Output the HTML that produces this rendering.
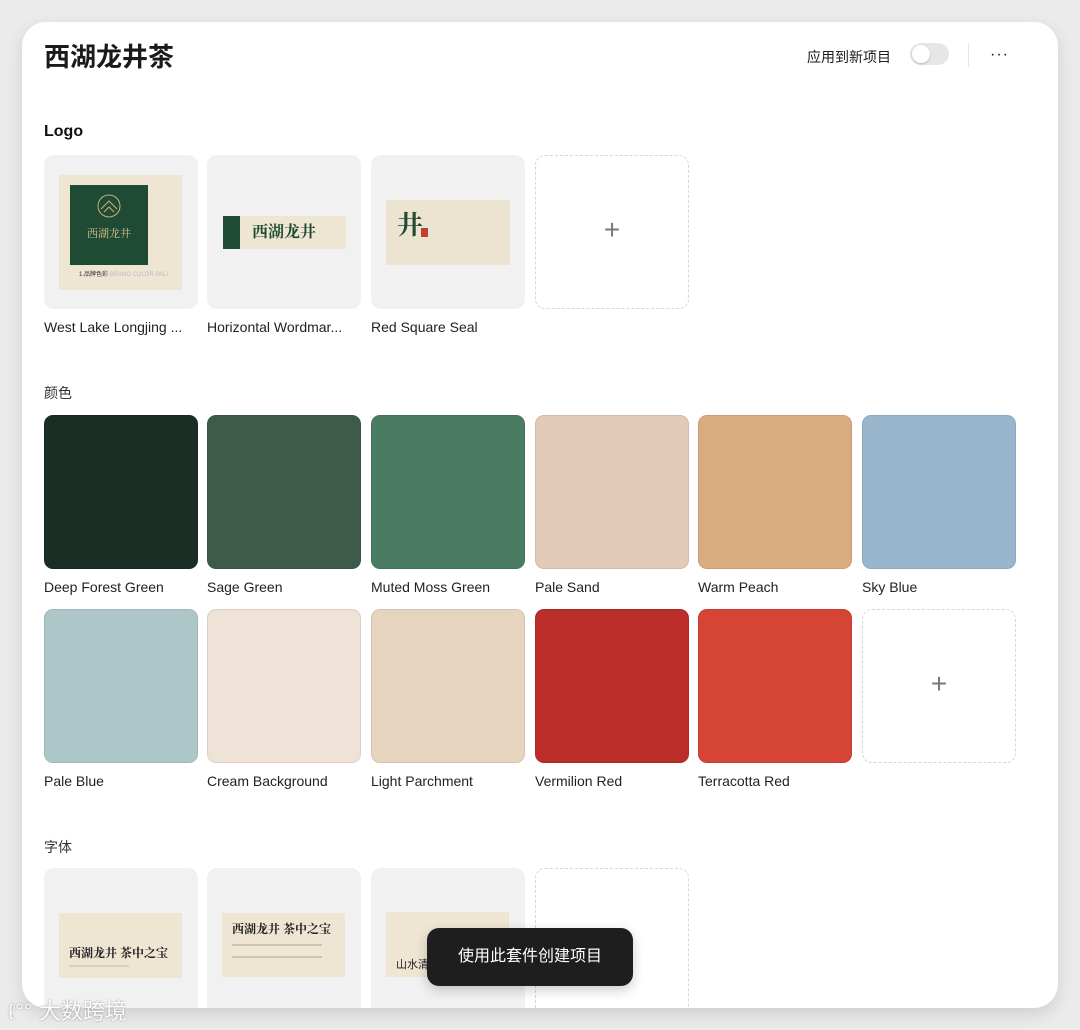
<!DOCTYPE html>
<html><head><meta charset="utf-8"><style>
*{margin:0;padding:0;box-sizing:border-box}
body{width:1080px;height:1030px;background:#ebebeb;font-family:"Liberation Sans","Noto Sans CJK SC",sans-serif;position:relative;overflow:hidden;color:#1a1a1a}
.card{position:absolute;left:22px;top:22px;width:1036px;height:986px;background:#fff;border-radius:24px;overflow:hidden;box-shadow:0 6px 16px rgba(0,0,0,.12)}
.title{position:absolute;left:22px;top:15px;font-size:26px;font-weight:700}
.apply{position:absolute;left:785px;top:25px;font-size:14px}
.tog{position:absolute;left:888px;top:21px;width:39px;height:22px;border-radius:11px;background:#e6e6e6}
.tog::after{content:"";position:absolute;left:2px;top:2px;width:18px;height:18px;border-radius:50%;background:#fff;box-shadow:0 1px 2px rgba(0,0,0,.2)}
.sep{position:absolute;left:946px;top:21px;width:1px;height:24px;background:#e5e5e5}
.dots{position:absolute;left:968px;top:24px;font-size:16px;letter-spacing:1px}
.h{position:absolute;left:22px;font-size:14px;color:#333}
.t{position:absolute;width:154px;height:154px;border-radius:10px}
.g{background:#f1f1f1}
.d{border:1.5px dashed #d6d6d6;background:#fff}
.d::after{content:"+";position:absolute;left:0;right:0;top:58px;text-align:center;font-size:28px;font-weight:300;color:#777}
.lab{position:absolute;font-size:14px;color:#222;white-space:nowrap}
.sw{position:absolute;width:154px;height:154px;border-radius:9px;border:1px solid rgba(0,0,0,.08)}
.btn{position:absolute;left:427px;top:928px;width:206px;height:58px;border-radius:12px;background:#1e1e1e;color:#fff;font-size:16px;text-align:center;line-height:58px;box-shadow:0 4px 12px rgba(0,0,0,.2)}
.wm{position:absolute;left:8px;top:994px;font-size:22px;color:#fff;text-shadow:0 0 2px #888;opacity:.9}
.cream{position:absolute;background:#efe5d3}
</style></head><body>
<div class="card">
<div class="title">西湖龙井茶</div>
<div class="apply">应用到新项目</div><div class="tog"></div><div class="sep"></div><div class="dots">···</div>

<div class="h" style="top:101px;font-weight:700;font-size:16px;color:#111">Logo</div>
<div class="t g" style="left:22px;top:133px">
 <div class="cream" style="left:15px;top:20px;width:123px;height:115px"></div>
 <div style="position:absolute;left:26px;top:30px;width:78px;height:80px;background:#1f4a33"></div>
 <svg style="position:absolute;left:52px;top:38px" width="26" height="26"><circle cx="13" cy="13" r="11" fill="none" stroke="#c9b27a"/><path d="M5 16 L13 8 L21 16 M8 19 L13 14 L18 19" fill="none" stroke="#c9b27a"/></svg>
 <div style="position:absolute;left:26px;top:70px;width:78px;text-align:center;color:#d8c590;font-size:11px;font-family:'Noto Serif CJK SC',serif">西湖龙井</div>
 <div style="position:absolute;left:35px;top:114px;font-size:6px;color:#333">1.品牌色彩 <span style="color:#bbb">BRAND COLOR PALI</span></div>
</div>
<div class="t g" style="left:185px;top:133px">
 <div class="cream" style="left:16px;top:61px;width:123px;height:33px"></div>
 <div style="position:absolute;left:16px;top:61px;width:17px;height:33px;background:#1f4a33"></div>
 <div style="position:absolute;left:45px;top:64px;font-size:16px;font-weight:700;color:#1f4a33;font-family:'Noto Serif CJK SC',serif">西湖龙井</div>
</div>
<div class="t g" style="left:349px;top:133px">
 <div class="cream" style="left:15px;top:45px;width:124px;height:65px;background:#ece3d1"></div>
 <div style="position:absolute;left:26px;top:50px;font-size:26px;font-weight:700;color:#1f4a33;font-family:'Noto Serif CJK SC',serif">井</div>
 <div style="position:absolute;left:50px;top:73px;width:7px;height:9px;background:#c04030"></div>
</div>
<div class="t d" style="left:513px;top:133px"></div>
<div class="lab" style="left:22px;top:297px">West Lake Longjing ...</div>
<div class="lab" style="left:185px;top:297px">Horizontal Wordmar...</div>
<div class="lab" style="left:349px;top:297px">Red Square Seal</div>

<div class="h" style="top:361px">颜色</div>
<div class="sw" style="left:22px;top:393px;background:#1a2e25"></div>
<div class="sw" style="left:185px;top:393px;background:#3d5b4a"></div>
<div class="sw" style="left:349px;top:393px;background:#4a7b63"></div>
<div class="sw" style="left:513px;top:393px;background:#e2cab8"></div>
<div class="sw" style="left:676px;top:393px;background:#dbab80"></div>
<div class="sw" style="left:840px;top:393px;background:#9ab6cc"></div>
<div class="lab" style="left:22px;top:557px">Deep Forest Green</div>
<div class="lab" style="left:185px;top:557px">Sage Green</div>
<div class="lab" style="left:349px;top:557px">Muted Moss Green</div>
<div class="lab" style="left:513px;top:557px">Pale Sand</div>
<div class="lab" style="left:676px;top:557px">Warm Peach</div>
<div class="lab" style="left:840px;top:557px">Sky Blue</div>
<div class="sw" style="left:22px;top:587px;background:#adc7c8"></div>
<div class="sw" style="left:185px;top:587px;background:#efe2d6"></div>
<div class="sw" style="left:349px;top:587px;background:#e6d4bf"></div>
<div class="sw" style="left:513px;top:587px;background:#bb2d28"></div>
<div class="sw" style="left:676px;top:587px;background:#d64436"></div>
<div class="t d" style="left:840px;top:587px"></div>
<div class="lab" style="left:22px;top:751px">Pale Blue</div>
<div class="lab" style="left:185px;top:751px">Cream Background</div>
<div class="lab" style="left:349px;top:751px">Light Parchment</div>
<div class="lab" style="left:513px;top:751px">Vermilion Red</div>
<div class="lab" style="left:676px;top:751px">Terracotta Red</div>

<div class="h" style="top:815px">字体</div>
<div class="t g" style="left:22px;top:846px;height:200px">
 <div class="cream" style="left:15px;top:45px;width:123px;height:65px"></div>
 <div style="position:absolute;left:25px;top:76px;font-size:12px;font-weight:700;color:#222;font-family:'Noto Serif CJK SC',serif">西湖龙井 茶中之宝</div>
 <div style="position:absolute;left:25px;top:97px;width:60px;height:2px;background:#ddd0b8"></div>
</div>
<div class="t g" style="left:185px;top:846px;height:200px">
 <div class="cream" style="left:15px;top:45px;width:123px;height:64px"></div>
 <div style="position:absolute;left:25px;top:52px;font-size:12px;font-weight:700;color:#222;font-family:'Noto Serif CJK SC',serif">西湖龙井 茶中之宝</div>
 <div style="position:absolute;left:25px;top:76px;width:90px;height:14px;border-top:2px solid #cfc3ad;border-bottom:2px solid #cfc3ad"></div>
</div>
<div class="t g" style="left:349px;top:846px;height:200px">
 <div class="cream" style="left:15px;top:44px;width:123px;height:65px"></div>
 <div style="position:absolute;left:25px;top:88px;font-size:11px;color:#222">山水清</div>
</div>
<div class="t d" style="left:513px;top:846px;height:200px"></div>
</div>
<div class="btn">使用此套件创建项目</div>
<div class="wm">ℓ°° 大数跨境</div>
</body></html>
